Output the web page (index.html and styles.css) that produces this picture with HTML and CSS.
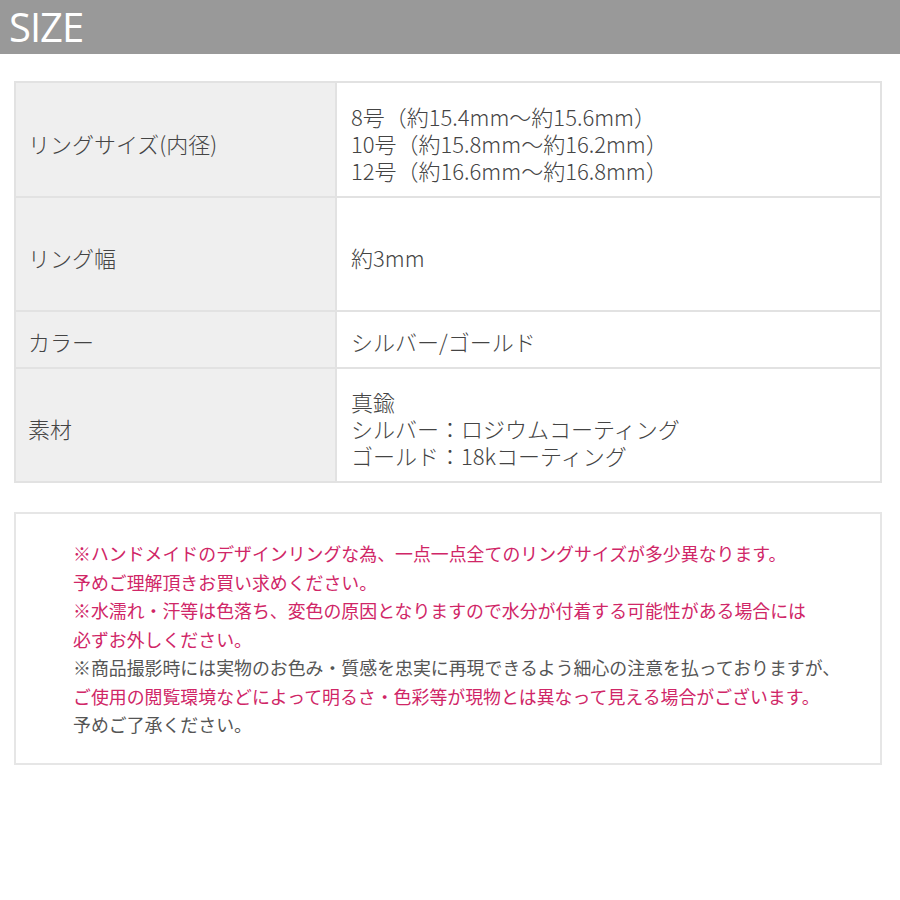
FILE: index.html
```html
<!DOCTYPE html>
<html lang="ja">
<head>
<meta charset="utf-8">
<title>SIZE</title>
<link rel="stylesheet" href="styles.css">
</head>
<body>
<header class="title-bar"><h1 class="title">SIZE</h1></header>
<main class="content">
  <div class="spec">
    <div class="spec-label">リングサイズ(内径)</div>
    <div class="spec-value">8号（約15.4mm～約15.6mm）<br>10号（約15.8mm～約16.2mm）<br>12号（約16.6mm～約16.8mm）</div>
    <div class="spec-label single">リング幅</div>
    <div class="spec-value single">約3mm</div>
    <div class="spec-label short">カラー</div>
    <div class="spec-value short">シルバー/ゴールド</div>
    <div class="spec-label last">素材</div>
    <div class="spec-value last">真鍮<br>シルバー：ロジウムコーティング<br>ゴールド：18kコーティング</div>
  </div>
  <div class="notice">
    <p class="pink">※ハンドメイドのデザインリングな為、一点一点全てのリングサイズが多少異なります。<br>予めご理解頂きお買い求めください。</p>
    <p class="pink">※水濡れ・汗等は色落ち、変色の原因となりますので水分が付着する可能性がある場合には<br>必ずお外しください。</p>
    <p class="gray">※商品撮影時には実物のお色み・質感を忠実に再現できるよう細心の注意を払っておりますが、<br><span class="pink">ご使用の閲覧環境などによって明るさ・色彩等が現物とは異なって見える場合がございます。</span><br>予めご了承ください。</p>
  </div>
</main>
</body>
</html>
```
FILE: styles.css
```css
html, body {
  margin: 0;
  padding: 0;
  background: #ffffff;
}
body {
  font-family: "Noto Sans CJK JP", "Noto Sans", sans-serif;
  font-weight: 300;
  color: #444444;
}
.title-bar {
  background: #999999;
  height: 54px;
  display: flex;
  align-items: center;
  padding-left: 9px;
}
.title {
  margin: 0;
  font-family: "Open Sans", "Noto Sans", sans-serif;
  font-weight: 400;
  font-size: 40px;
  letter-spacing: -1px;
  color: #ffffff;
  line-height: 1;
}
.content {
  padding: 27px 18px 0 14px;
}
.spec {
  display: grid;
  grid-template-columns: 321px 1fr;
  border: 2px solid #e2e2e2;
  border-bottom: none;
}
.spec-label,
.spec-value {
  display: flex;
  align-items: center;
  border-bottom: 2px solid #e2e2e2;
  font-size: 22px;
  line-height: 27px;
  padding-top: 20px;
  padding-bottom: 12px;
}
.spec-label {
  background: #efefef;
  border-right: 2px solid #e2e2e2;
  padding-left: 12px;
}
.spec-value {
  padding-left: 14px;
}
.spec-label.single,
.spec-value.single {
  padding-top: 46px;
  padding-bottom: 39px;
}
.spec-label.short,
.spec-value.short {
  padding-top: 16px;
  padding-bottom: 12px;
}
.spec-label.last,
.spec-value.last {
  padding-top: 19px;
  padding-bottom: 12px;
}
.notice {
  margin-top: 29px;
  border: 2px solid #e6e6e6;
  padding: 25px 20px 24px 57px;
  font-size: 17.9px;
  font-weight: 400;
  line-height: 28.5px;
}
.notice p {
  margin: 0;
}
.pink {
  color: #d02667;
}
.gray {
  color: #555555;
}
```
